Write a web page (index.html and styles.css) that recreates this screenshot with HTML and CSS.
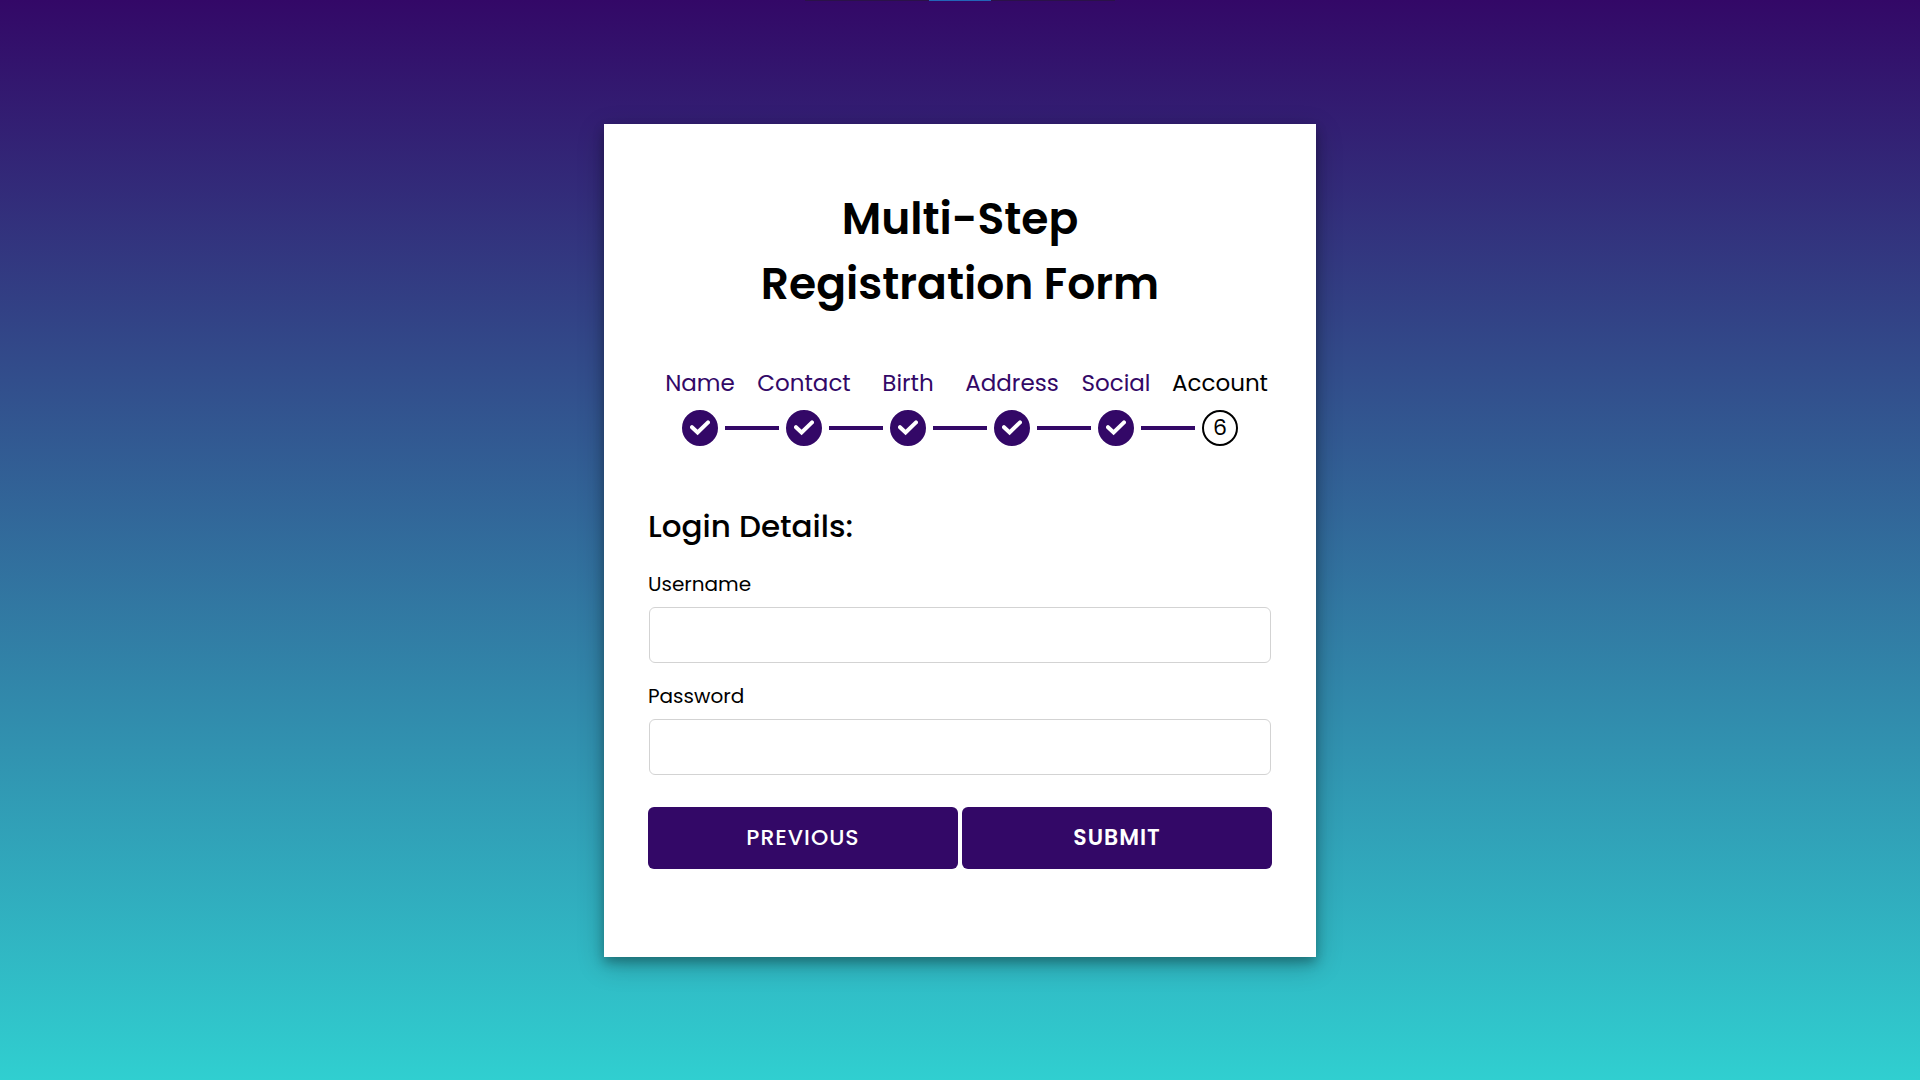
FILE: index.html
```html
<!DOCTYPE html>
<html lang="en">
<head>
<meta charset="UTF-8">
<meta name="viewport" content="width=device-width, initial-scale=1.0">
<title>Multi-Step Registration Form</title>
<link rel="stylesheet" href="styles.css">
</head>
<body>
  <div class="top-bar"><span></span></div>

  <svg class="symbols" aria-hidden="true">
    <symbol id="check" viewBox="0 0 20 16">
      <path d="M2 7.2 L7.6 12.4 L18 2.4" fill="none" stroke="currentColor" stroke-width="4" stroke-linejoin="miter" stroke-linecap="round"/>
    </symbol>
  </svg>

  <div class="container">
    <header>
      <h1>Multi-Step<br>Registration Form</h1>
    </header>

    <ol class="progress-bar">
      <li class="step done">
        <p>Name</p>
        <div class="track"><span class="bullet"><svg><use href="#check"/></svg></span></div>
      </li>
      <li class="step done">
        <p>Contact</p>
        <div class="track"><span class="bullet"><svg><use href="#check"/></svg></span></div>
      </li>
      <li class="step done">
        <p>Birth</p>
        <div class="track"><span class="bullet"><svg><use href="#check"/></svg></span></div>
      </li>
      <li class="step done">
        <p>Address</p>
        <div class="track"><span class="bullet"><svg><use href="#check"/></svg></span></div>
      </li>
      <li class="step done">
        <p>Social</p>
        <div class="track"><span class="bullet"><svg><use href="#check"/></svg></span></div>
      </li>
      <li class="step">
        <p>Account</p>
        <div class="track"><span class="bullet">6</span></div>
      </li>
    </ol>

    <form action="#">
      <h2>Login Details:</h2>
      <div class="field">
        <label for="username">Username</label>
        <input type="text" id="username" name="username">
      </div>
      <div class="field">
        <label for="password">Password</label>
        <input type="password" id="password" name="password">
      </div>
      <div class="btns">
        <button type="button" class="prev">Previous</button>
        <button type="submit" class="submit">Submit</button>
      </div>
    </form>
  </div>
</body>
</html>
```
FILE: styles.css
```css
* {
  margin: 0;
  padding: 0;
  box-sizing: border-box;
  font-family: Poppins, Inter, sans-serif;
}
body {
  min-height: 100vh;
  display: flex;
  align-items: center;
  justify-content: center;
  color: #000;
  background: linear-gradient(to bottom, #330867 0%, #30cfd0 100%);
}
.symbols {
  display: none;
}
/* thin strip over the top edge of the page */
.top-bar {
  position: absolute;
  top: 0;
  left: 0;
  right: 0;
  height: 1px;
  display: flex;
  justify-content: center;
}
.top-bar::before,
.top-bar::after {
  content: "";
  width: 124px;
  background: #2a1248;
}
.top-bar span {
  width: 62px;
  background: #2366b8;
}
.container {
  width: 100%;
  max-width: 712px;
  padding: 62px 44px 88px;
  background: #fff;
  box-shadow: 0 5px 10px rgba(0, 0, 0, 0.25), 0 8px 24px rgba(0, 0, 0, 0.25);
}
h1 {
  font-size: 44px;
  line-height: 65px;
  font-weight: 600;
  text-align: center;
}
.progress-bar {
  display: flex;
  margin: 50px 0 57px;
  list-style: none;
}
.step {
  flex: 1;
  min-width: 0;
  text-align: center;
}
.step p {
  font-size: 23px;
  line-height: 34px;
  margin-bottom: 10px;
}
.step.done p {
  color: #330867;
}
.track {
  display: flex;
  align-items: center;
  gap: 7px;
}
/* each step draws half of the line on either side of its bullet */
.track::before,
.track::after {
  content: "";
  flex: 1;
  height: 4px;
  background: #330867;
}
.step:first-child .track::before,
.step:last-child .track::after {
  background: none;
}
.bullet {
  width: 36px;
  height: 36px;
  display: flex;
  align-items: center;
  justify-content: center;
  border: 2px solid #000;
  border-radius: 50%;
  font-size: 22px;
}
.done .bullet {
  color: #fff;
  border-color: #330867;
  background: #330867;
}
.bullet svg {
  width: 20px;
  height: 16px;
}
h2 {
  font-size: 31px;
  line-height: 46px;
  font-weight: 500;
  margin-bottom: 20px;
}
.field {
  margin-bottom: 18px;
}
.field label {
  display: block;
  font-size: 20px;
  line-height: 30px;
  margin-bottom: 8px;
}
.field input {
  display: block;
  width: calc(100% - 2px);
  height: 56px;
  margin: 0 1px;
  padding: 0 16px;
  border: 1px solid #d3d3d3;
  border-radius: 6px;
  font-size: 20px;
  outline: none;
}
.btns {
  display: flex;
  gap: 4px;
  margin-top: 32px;
}
.btns button {
  flex: 1;
  height: 62px;
  border: none;
  border-radius: 6px;
  background: #330867;
  color: #fff;
  font-size: 22px;
  font-weight: 500;
  letter-spacing: 1px;
  text-transform: uppercase;
  cursor: pointer;
}
.btns .submit {
  font-weight: 600;
}
```
